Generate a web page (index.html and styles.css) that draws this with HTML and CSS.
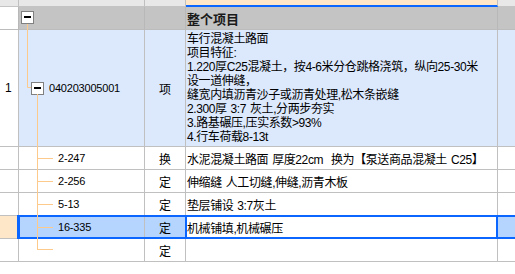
FILE: index.html
```html
<!DOCTYPE html>
<html lang="zh-CN">
<head>
    <meta charset="UTF-8">
    <title>清单</title>
    <link rel="stylesheet" href="styles.css">
</head>
<body>
    <div class="grid">
        <div class="row top">
            <div class="c c1"></div>
            <div class="c c2"></div>
            <div class="c c3"></div>
            <div class="c c4"></div>
            <div class="c c5"></div>
        </div>

        <div class="row group">
            <div class="c c1"></div>
            <div class="c c2"><span class="box box-root"></span></div>
            <div class="c c3"></div>
            <div class="c c4"><b class="title">整个项目</b></div>
            <div class="c c5"></div>
        </div>

        <div class="row item">
            <div class="c c1"><span class="num">1</span></div>
            <div class="c c2"><span class="box box-item"></span><span class="code">040203005001</span></div>
            <div class="c c3">项</div>
            <div class="c c4">
                <div class="desc">
                    车行混凝土路面<br>
                    项目特征:<br>
                    1.220厚C25混凝土，按4-6米分仓跳格浇筑，纵向25-30米<br>
                    设一道伸缝，<br>
                    缝宽内填沥青沙子或沥青处理,松木条嵌缝<br>
                    2.300厚 3:7 灰土,分两步夯实<br>
                    3.路基碾压,压实系数&gt;93%<br>
                    4.行车荷载8-13t
                </div>
            </div>
            <div class="c c5"></div>
        </div>

        <div class="row sub">
            <div class="c c1"></div>
            <div class="c c2"><span class="code child">2-247</span></div>
            <div class="c c3">换</div>
            <div class="c c4">水泥混凝土路面 厚度22cm &nbsp;换为【泵送商品混凝土 C25】</div>
            <div class="c c5"></div>
        </div>

        <div class="row sub">
            <div class="c c1"></div>
            <div class="c c2"><span class="code child">2-256</span></div>
            <div class="c c3">定</div>
            <div class="c c4">伸缩缝 人工切缝,伸缝,沥青木板</div>
            <div class="c c5"></div>
        </div>

        <div class="row sub">
            <div class="c c1"></div>
            <div class="c c2"><span class="code child">5-13</span></div>
            <div class="c c3">定</div>
            <div class="c c4">垫层铺设 3:7灰土</div>
            <div class="c c5"></div>
        </div>

        <div class="row sub sel">
            <div class="c c1"></div>
            <div class="c c2"><span class="code child">16-335</span></div>
            <div class="c c3">定</div>
            <div class="c c4 editing">机械铺填,机械碾压</div>
            <div class="c c5"></div>
        </div>

        <div class="row sub">
            <div class="c c1"></div>
            <div class="c c2"></div>
            <div class="c c3">定</div>
            <div class="c c4"></div>
            <div class="c c5"></div>
        </div>

        <!-- tree connectors -->
        <svg class="tree" width="515" height="274" viewBox="0 0 515 274">
            <path d="M27.5 24V87.5H31M37.5 94V250M37 158.5H53M37 181.5H53M37 204.5H53M37 227.5H53M37 249.5H53"
                  fill="none" stroke="#fdca8c" stroke-width="1"/>
        </svg>
    </div>
</body>
</html>
```

FILE: styles.css
```css
* {
    box-sizing: border-box;
}

body {
    margin: 0;
    background: #ffffff;
    overflow: hidden;
}

.grid {
    position: relative;
    width: 515px;
    font-family: "Liberation Sans", "Noto Sans CJK SC", sans-serif;
    font-size: 12px;
    color: #000000;
}

.row {
    display: flex;
}

.c {
    display: flex;
    align-items: center;
    border-right: 1px solid #c0c0c0;
    border-bottom: 1px solid #c0c0c0;
    white-space: nowrap;
    overflow: hidden;
}

.c1 { width: 19px; }
.c2 { width: 126px; }
.c3 { width: 41px; justify-content: center; }
.c4 {
    width: 312px;
    padding-left: 1px;
    letter-spacing: -0.4px;
    word-spacing: 1px;
}
.c5 { flex: 1; border-right: none; }

/* header strip */
.top { height: 7px; }
.top .c {
    background: #e8e8e8;
    border-bottom-color: #c4c4c4;
}
.top .c4 {
    background: #fee7c8;
    border-bottom: 2px solid #0a66ff;
}

/* group row */
.group { height: 23px; }
.group .c {
    background: #c4c4c4;
    border-bottom-color: #bcbcbc;
    border-right-color: #b8b8b8;
}
.group .c1 { background: #ffffff; }

.title {
    font-size: 13px;
    font-weight: bold;
    letter-spacing: 0;
    color: #1a1a1a;
}

/* item row */
.item { height: 117px; }
.item .c { background: #dce9fd; }
.item .c1 { background: #ffffff; }
.item .c4 { align-items: flex-start; }

.desc {
    padding-top: 2px;
    line-height: 14px;
}

.num {
    padding-left: 5px;
}

/* sub rows */
.sub { height: 23px; }

.code {
    font-size: 11px;
    letter-spacing: -0.2px;
}

.child {
    padding-left: 39px;
}

/* tree boxes */
.box {
    display: inline-block;
    width: 13px;
    height: 13px;
    padding: 4px 0 0 2px;
    border: 1px solid #808080;
    background: #ffffff;
}
.box::before {
    content: "";
    display: block;
    width: 7px;
    height: 2px;
    background: #000000;
}
.box-root { margin-left: 2px; margin-bottom: 1px; }
.box-item { margin-left: 12px; margin-right: 5px; }

/* selected row */
.sel { position: relative; }
.sel .c1 { background: #fee7c8; }
.sel .c2,
.sel .c3,
.sel .c5 { background: #b5d5ff; }
.sel .c4 {
    position: relative;
    overflow: visible;
    background: #ffffff;
}

.sel::after {
    content: "";
    position: absolute;
    top: -1px;
    bottom: 0;
    left: 17px;
    right: -10px;
    border: 2px solid #0a66ff;
    border-left-width: 3px;
}

.editing::after {
    content: "";
    position: absolute;
    top: -1px;
    bottom: -1px;
    left: -1px;
    right: -1px;
    border: 2px solid #0a66ff;
}

.tree {
    position: absolute;
    top: 0;
    left: 0;
    pointer-events: none;
}
```
